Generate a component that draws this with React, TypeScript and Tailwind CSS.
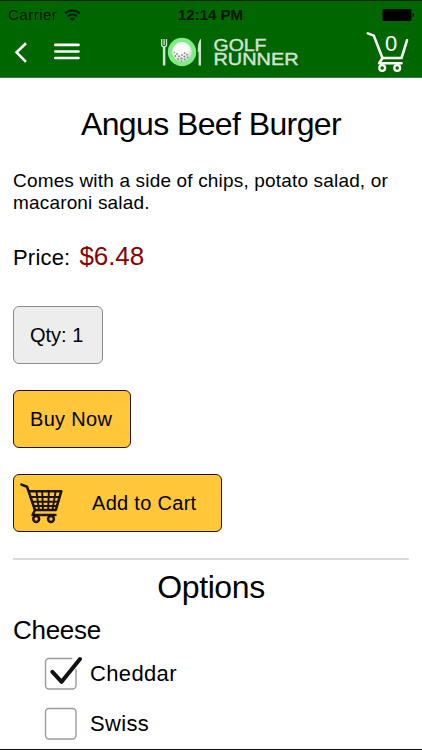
import type { ReactNode } from 'react';

function WifiIcon() {
  return (
    <svg width="17" height="13" viewBox="0 0 17 13" fill="none" stroke="#061a06" strokeWidth="2">
      <path d="M1.2 4.4C5.2.6 11.8.6 15.8 4.4" />
      <path d="M3.9 7.3c2.7-2.4 6.5-2.4 9.2 0" />
      <path d="M8.5 12 5.8 9.5c1.5-1.3 3.9-1.3 5.4 0Z" fill="#061a06" stroke="none" />
    </svg>
  );
}

function StatusBar() {
  return (
    <div className="flex h-[29px] items-center border-t border-[#062406] text-[#031503]">
      <div className="flex w-[178px] items-center gap-[7px] pl-2 text-[15px] tracking-[0.5px]">
        <span>Carrier</span>
        <WifiIcon />
      </div>
      <span className="w-[204px] text-[15px] font-bold">12:14 PM</span>
      <svg width="33" height="14" viewBox="0 0 33 14">
        <rect x="0.5" y="1" width="29" height="12" rx="1.5" fill="#000" />
        <path d="M30.5 5v4q1.7-.6 1.7-2t-1.7-2Z" fill="#031503" />
      </svg>
    </div>
  );
}

function Logo() {
  return (
    <svg width="142" height="34" viewBox="160 34 142 34" className="ml-20">
      <defs>
        <radialGradient id="ball" cx="0.4" cy="0.3" r="0.75">
          <stop offset="0.45" stopColor="#fff" />
          <stop offset="1" stopColor="#c3d3c5" />
        </radialGradient>
      </defs>
      <g stroke="#d3e3d3" fill="none">
        <path d="M161.7 38v6q0 1.7 2.4 1.7t2.4-1.7v-6M164.1 38v6" strokeWidth="1.3" />
        <path d="M164.1 45v19.5" strokeWidth="2.5" />
      </g>
      <path d="M201 37.5q-3.3 3.5-3.3 13l.9.8v13.2h2.4Z" fill="#d3e3d3" />
      <circle cx="182" cy="51" r="14.2" fill="#7cee84" />
      <circle cx="182" cy="51" r="9.9" fill="url(#ball)" />
      <g fill="#7c887e">
        <circle cx="174.4" cy="51.5" r="0.8" />
        <circle cx="177" cy="53" r="0.9" />
        <circle cx="175.3" cy="55" r="0.9" />
        <circle cx="179" cy="55.2" r="1" />
        <circle cx="182" cy="54" r="0.9" />
        <circle cx="184.6" cy="52.2" r="0.9" />
        <circle cx="187" cy="53.7" r="0.9" />
        <circle cx="184.4" cy="55.5" r="1" />
        <circle cx="178" cy="58" r="0.9" />
        <circle cx="181.5" cy="57.5" r="1.1" />
        <circle cx="184.8" cy="58.3" r="0.9" />
        <circle cx="187.7" cy="56.4" r="0.9" />
        <circle cx="181.3" cy="60" r="0.7" />
      </g>
      <g fill="#d3e3d3" stroke="#d3e3d3" strokeWidth="0.4" fontSize="16.5" className="font-['Liberation_Sans',sans-serif]">
        <text x="213.5" y="49.6" textLength="53" lengthAdjust="spacingAndGlyphs">GOLF</text>
        <text x="213.5" y="64" textLength="85" lengthAdjust="spacingAndGlyphs">RUNNER</text>
      </g>
    </svg>
  );
}

function HeaderCart({ count }: { count: number }) {
  return (
    <svg width="44" height="42" viewBox="366 30 44 42" className="mr-3 ml-auto">
      <g fill="none" stroke="#fff" strokeWidth="2.6" strokeLinecap="round" strokeLinejoin="round">
        <path d="M367.8 32.4 373.8 34.6 382.5 57H401.5L407 39.3" />
        <path d="M382.5 57 379.2 62.3H401.5" />
        <circle cx="382.2" cy="67" r="2.9" strokeWidth="2.3" />
        <circle cx="397.2" cy="67" r="2.9" strokeWidth="2.3" />
      </g>
      <text x="391" y="49.8" textAnchor="middle" fontSize="22" fill="#fff" className="font-['Liberation_Sans',sans-serif]">
        {count}
      </text>
    </svg>
  );
}

function Header() {
  return (
    <header className="h-[78px] border-b border-[#3f7c45] bg-[#006600]">
      <StatusBar />
      <div className="flex h-[45px] items-center">
        <svg width="66" height="22" viewBox="14 40 66 22" fill="none" stroke="#fff" strokeLinecap="round" className="ml-3.5">
          <path d="M26 42.2 16.6 51.3 26 60.8" strokeWidth="2.6" strokeLinecap="butt" />
          <path d="M55.3 43.9H78.5M55.3 50.5H78.5M55.3 57H78.5" strokeWidth="2.6" />
        </svg>
        <Logo />
        <HeaderCart count={0} />
      </div>
    </header>
  );
}

function FilledCart() {
  return (
    <svg width="44" height="42" viewBox="20 482 44 42" fill="none" stroke="#1d1303" strokeLinecap="round" strokeLinejoin="round">
      <path d="M21.5 484.6 27 486.7 35 510H55.8L61.3 491.2H29" strokeWidth="2.6" />
      <path d="M30.5 497H59.2M32.3 501.8H58M34 506H56.5M36.5 492 39 510M42.2 492 43 510M48.8 492 48.2 510M55.5 492 52.5 510" strokeWidth="1.9" />
      <path d="M35 510 32.5 515H55.5" strokeWidth="2.4" />
      <circle cx="36.2" cy="519" r="2.9" strokeWidth="2.5" />
      <circle cx="51" cy="519" r="2.9" strokeWidth="2.5" />
    </svg>
  );
}

function ActionButton({ className, children }: { className: string; children: ReactNode }) {
  return (
    <button className={`flex h-[58px] items-center rounded-md border border-[#211704] bg-[#ffc739] text-[20px] tracking-[0.3px] ${className}`}>
      {children}
    </button>
  );
}

function Option({ label, checked = false }: { label: string; checked?: boolean }) {
  return (
    <label className="flex h-[50px] items-center gap-[8px] pl-[31px] text-[22px] tracking-[0.35px]">
      <svg width="38" height="34" viewBox="0 0 38 34" fill="none">
        <rect x="1.5" y="2.5" width="30.5" height="30.5" rx="3.5" stroke="#9c9c9c" strokeWidth="1.4" />
        {checked && (
          <>
            <path d="M28 0h7v13h-6Z" fill="#fff" />
            <path d="M8.4 15.8 17.6 25.8 36 3" stroke="#111" strokeWidth="4" strokeLinejoin="round" strokeLinecap="round" />
          </>
        )}
      </svg>
      <span>{label}</span>
    </label>
  );
}

export default function App() {
  return (
    <div className="h-[750px] overflow-hidden border-b border-[#111] bg-white font-['Liberation_Sans',Arial,sans-serif] text-black">
      <Header />
      <main className="px-[13px]">
        <h1 className="pt-[26px] text-center text-[32px] leading-10 tracking-[-0.6px]">Angus Beef Burger</h1>
        <p className="mt-[26px] text-[19px] leading-[22px] tracking-[0.17px]">
          Comes with a side of chips, potato salad, or
          <br />
          macaroni salad.
        </p>
        <div className="mt-[26px] flex h-[32px] items-baseline gap-[9px]">
          <span className="text-[22px] tracking-[0.2px]">Price:</span>
          <span className="text-[26px] leading-8 tracking-[-0.1px] text-[#8b0000]">$6.48</span>
        </div>
        <button className="mt-[34px] flex h-[58px] w-[90px] items-center rounded-md border border-[#8c8c8c] bg-[#ededed] pl-4 text-[20px]">
          Qty: 1
        </button>
        <ActionButton className="mt-[26px] w-[118px] pl-4">Buy Now</ActionButton>
        <ActionButton className="mt-[26px] w-[209px] gap-7 pl-1.5">
          <FilledCart />
          <span>Add to Cart</span>
        </ActionButton>
        <hr className="mt-[26px] border-t-2 border-[#dadada]" />
        <h2 className="mt-[7px] text-center text-[32px] leading-10 tracking-[-0.4px]">Options</h2>
        <h3 className="mt-[7px] text-[26px] leading-[32px] tracking-[-0.3px]">Cheese</h3>
        <div className="mt-[2px]">
          <Option label="Cheddar" checked />
          <Option label="Swiss" />
        </div>
      </main>
    </div>
  );
}
